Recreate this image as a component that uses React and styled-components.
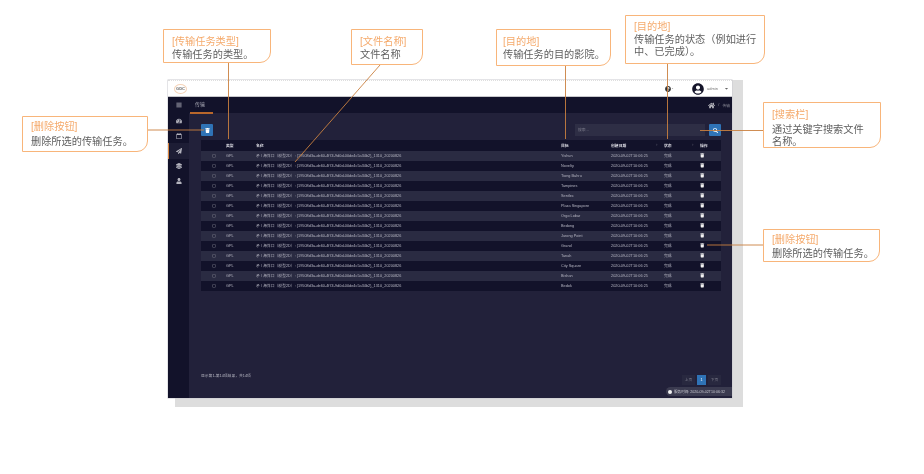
import styled, { createGlobalStyle } from "styled-components";
import {
  FaBars,
  FaTachometerAlt,
  FaRegCalendar,
  FaPaperPlane,
  FaLayerGroup,
  FaUser,
  FaTrash,
  FaSearch,
  FaHome,
  FaUserCircle,
  FaQuestionCircle,
  FaCaretDown,
  FaRegCircle,
} from "react-icons/fa";

const FILE_NAME =
  "矛 / 海洋口（模型2D）: {19508d3a-de60-4f74-9d0d-00de4c5a34b2}_1310_20200826";
const DATE = "2020-09-02T10:06:25";

const SITES = [
  "Yishun",
  "Novelty",
  "Tiong Bahru",
  "Tampines",
  "Sentlec",
  "Plaza Singapore",
  "Orgo Lobar",
  "Bedong",
  "Jurong Point",
  "Grand",
  "Tanah",
  "City Square",
  "Bishan",
  "Bedok",
];

const NAV_ICONS = [
  { Icon: FaTachometerAlt },
  { Icon: FaRegCalendar },
  { Icon: FaPaperPlane, active: true },
  { Icon: FaLayerGroup },
  { Icon: FaUser },
];

const CALLOUTS = [
  { title: "[传输任务类型]", text: "传输任务的类型。", x: 163, y: 29, w: 108, h: 34, top: 6 },
  { title: "[文件名称]", text: "文件名称", x: 351, y: 29, w: 72, h: 36, top: 6 },
  { title: "[删除按钮]", text: "删除所选的传输任务。", x: 22, y: 116, w: 126, h: 36, top: 4, gap: 2 },
  { title: "[目的地]", text: "传输任务的目的影院。", x: 496, y: 29, w: 115, h: 37, pad: 6, top: 6 },
  {
    title: "[目的地]",
    text: "传输任务的状态（例如进行中、已完成）。",
    x: 625,
    y: 15,
    w: 140,
    h: 49,
  },
  { title: "[搜索栏]", text: "通过关键字搜索文件名称。", x: 763, y: 102, w: 118, h: 46, right: 14, top: 6, gap: 2 },
  { title: "[删除按钮]", text: "删除所选的传输任务。", x: 763, y: 229, w: 117, h: 33, top: 4, gap: 1.5 },
];

const GlobalStyle = createGlobalStyle`
  html, body {
    margin: 0;
    padding: 0;
    background: #ffffff;
    font-family: "Liberation Sans", "Noto Sans CJK SC", sans-serif;
  }
`;

const Page = styled.div`
  position: relative;
  width: 924px;
  height: 474px;
  overflow: hidden;
  background: #fff;
  padding: 83px 0 0 175px;
  box-sizing: border-box;
  filter: blur(0.35px);
`;

const Backing = styled.div`
  width: 568px;
  height: 327px;
  background: #dddddd;
`;

const Shot = styled.div`
  width: 564px;
  height: 318px;
  margin: -3px 0 0 -7px;
  display: flex;
  flex-direction: column;
  position: relative;
  background: #22213a;
  box-shadow: 0 0 0 0.5px #c9c9cf;
`;

const Header = styled.header`
  height: 17px;
  flex: none;
  background: #fff;
  display: flex;
  align-items: center;
  padding: 0 3px 0 6px;
  color: #8a8a8a;
  font-size: 4px;
  border-top: 1px dotted #dedede;
  border-bottom: 1px solid #c8c8cc;
  box-sizing: border-box;
`;

const Logo = styled.div`
  width: 13px;
  height: 10px;
  border-radius: 50%;
  border: 1px solid #f5d3b8;
  box-sizing: border-box;
  display: flex;
  align-items: center;
  justify-content: center;
  font-size: 4px;
  font-weight: 700;
  color: #666;
`;

const HeaderRight = styled.div`
  margin-left: auto;
  display: flex;
  align-items: center;
  color: #222;
`;

const HelpIcon = styled(FaQuestionCircle)`
  font-size: 6px;
  color: #333;
`;

const HelpCaret = styled(FaCaretDown)`
  font-size: 3px;
  color: #888;
  margin-right: 18px;
`;

const Avatar = styled(FaUserCircle)`
  font-size: 12px;
  color: #15152a;
  margin-right: 3px;
`;

const UserName = styled.span`
  color: #777;
  font-size: 4px;
  margin-right: 6px;
`;

const Caret = styled(FaCaretDown)`
  font-size: 5px;
  color: #666;
`;

const Body = styled.div`
  flex: 1;
  display: flex;
  min-height: 0;
`;

const Sidebar = styled.nav`
  width: 21px;
  flex: none;
  background: #12122a;
  display: flex;
  flex-direction: column;
  padding-top: 0.8px;
  color: #b4b4be;
`;

const NavItem = styled.div`
  height: 15.2px;
  display: flex;
  align-items: center;
  justify-content: center;
  font-size: 6px;
  box-sizing: border-box;
  background: ${(p) => (p.$active ? "#1d1d35" : "transparent")};
  border-left: 1px solid ${(p) => (p.$active ? "#d9853f" : "transparent")};
  padding-right: 1px;
`;

const Main = styled.main`
  flex: 1;
  min-width: 0;
  display: flex;
  flex-direction: column;
`;

const TopBar = styled.div`
  height: 16px;
  flex: none;
  background: #12122a;
  display: flex;
  align-items: center;
  padding: 0 2px 0 6px;
  color: #a8a8b4;
  font-size: 5px;
`;

const TabLabel = styled.span`
  position: relative;
  width: 22px;
  height: 16px;
  line-height: 15px;
  &::after {
    content: "";
    position: absolute;
    left: -5px;
    top: 15px;
    width: 23px;
    height: 1.5px;
    background: #b9672b;
  }
`;

const Crumbs = styled.div`
  margin-left: auto;
  display: flex;
  align-items: center;
  gap: 3px;
  font-size: 3.8px;
  color: #8c8c98;
`;

const HomeIcon = styled(FaHome)`
  font-size: 7px;
  color: #b5b5bd;
`;

const Content = styled.div`
  flex: 1;
  display: flex;
  flex-direction: column;
  padding: 11px 11px 2px 12px;
  min-height: 0;
`;

const Toolbar = styled.div`
  display: flex;
  align-items: center;
  height: 12px;
  margin-bottom: 4px;
`;

const BlueButton = styled.button`
  width: 12px;
  height: 12px;
  border: none;
  padding: 0;
  border-radius: 1px;
  background: #2f73b6;
  color: #fff;
  font-size: 5px;
  display: flex;
  align-items: center;
  justify-content: center;
`;

const SearchBox = styled.div`
  margin-left: auto;
  margin-right: 4px;
  width: 127px;
  height: 12px;
  padding-left: 3px;
  background: #2e2e45;
  color: #7f7f8e;
  font-size: 3.8px;
  line-height: 12px;
`;

const Row = styled.div`
  display: grid;
  grid-template-columns: 25px 30px 305px 50px 53px 36px 21px;
  align-items: center;
  height: 10px;
  font-size: 3.8px;
  letter-spacing: 0.02px;
  white-space: nowrap;
  color: ${(p) => (p.$head ? "#d8d8e0" : "#b6b6c2")};
  font-weight: ${(p) => (p.$head ? 700 : 400)};
  background: ${(p) => (p.$odd ? "#2a2b42" : "#12122a")};
`;

const HeadRow = styled(Row)`
  height: 10.5px;
`;

const RadioCell = styled.span`
  display: flex;
  justify-content: center;
  font-size: 4px;
  color: #7d7d8a;
`;

const SortCell = styled.span`
  display: flex;
  justify-content: space-between;
  padding-right: 6px;
`;

const SortMark = styled.span`
  color: #777785;
`;

const RowTrash = styled(FaTrash)`
  font-size: 4.5px;
  color: #f2f2f2;
`;

const Footer = styled.div`
  margin-top: auto;
  display: flex;
  align-items: flex-start;
  justify-content: space-between;
  height: 21px;
  font-size: 3.8px;
  color: #b5b5c0;
`;

const Summary = styled.span`
  line-height: 2px;
`;

const Pager = styled.div`
  display: flex;
  gap: 2px;
`;

const PageLink = styled.span`
  width: ${(p) => (p.$active ? "9px" : "13px")};
  height: 10px;
  line-height: 10px;
  text-align: center;
  background: ${(p) => (p.$active ? "#2f73b6" : "#28283f")};
  color: ${(p) => (p.$active ? "#fff" : "#7f7f8e")};
`;

const StatusPill = styled.div`
  position: absolute;
  right: 0;
  bottom: 2px;
  width: 66px;
  height: 9px;
  background: #3b3b50;
  border-radius: 4.5px 0 0 4.5px;
  color: #c8c8d0;
  font-size: 3.6px;
  display: flex;
  align-items: center;
  gap: 2px;
  padding-left: 2px;
  box-sizing: border-box;
  white-space: nowrap;
  overflow: hidden;
`;

const StatusDot = styled.span`
  width: 4px;
  height: 4px;
  border-radius: 50%;
  background: #f2f2f2;
  flex: none;
`;

const Leaders = styled.svg`
  position: absolute;
  left: 0;
  top: 0;
  pointer-events: none;
`;

const Callout = styled.div`
  position: absolute;
  left: ${(p) => p.$x}px;
  top: ${(p) => p.$y}px;
  width: ${(p) => p.$w}px;
  height: ${(p) => p.$h}px;
  box-sizing: border-box;
  padding: ${(p) => p.$top}px ${(p) => p.$right}px 0 ${(p) => p.$pad}px;
  background: #fff;
  border: 1.4px solid #f8b57a;
  border-radius: 0 0 11px 0;
  font-size: 10.2px;
  line-height: 12.5px;
  color: #5f5f5f;
`;

const CalloutTitle = styled.div`
  color: #f5aa6c;
`;

const CalloutText = styled.div`
  margin-top: ${(p) => p.$gap}px;
`;

export default function App() {
  return (
    <>
      <GlobalStyle />
      <Page>
        <Backing>
          <Shot>
            <Header>
              <Logo>GDC</Logo>
              <HeaderRight>
                <HelpIcon />
                <HelpCaret />
                <Avatar />
                <UserName>admin</UserName>
                <Caret />
              </HeaderRight>
            </Header>
            <Body>
              <Sidebar>
                <NavItem>
                  <FaBars />
                </NavItem>
                {NAV_ICONS.map(({ Icon, active }, i) => (
                  <NavItem key={i} $active={active}>
                    <Icon />
                  </NavItem>
                ))}
              </Sidebar>
              <Main>
                <TopBar>
                  <TabLabel>传输</TabLabel>
                  <Crumbs>
                    <HomeIcon />
                    <span>/</span>
                    <span>传输</span>
                  </Crumbs>
                </TopBar>
                <Content>
                  <Toolbar>
                    <BlueButton>
                      <FaTrash />
                    </BlueButton>
                    <SearchBox>搜索...</SearchBox>
                    <BlueButton>
                      <FaSearch />
                    </BlueButton>
                  </Toolbar>
                  <HeadRow $head>
                    <span />
                    <span>类型</span>
                    <span>名称</span>
                    <span>目标</span>
                    <SortCell>
                      创建日期<SortMark>↕</SortMark>
                    </SortCell>
                    <SortCell>
                      状态<SortMark>↕</SortMark>
                    </SortCell>
                    <span>操作</span>
                  </HeadRow>
                  {SITES.map((site, i) => (
                    <Row key={site} $odd={i % 2 === 0}>
                      <RadioCell>
                        <FaRegCircle />
                      </RadioCell>
                      <span>GPL</span>
                      <span>{FILE_NAME}</span>
                      <span>{site}</span>
                      <span>{DATE}</span>
                      <span>完成</span>
                      <RowTrash />
                    </Row>
                  ))}
                  <Footer>
                    <Summary>显示第1-第14项结果，共14项</Summary>
                    <Pager>
                      <PageLink>上页</PageLink>
                      <PageLink $active>1</PageLink>
                      <PageLink>下页</PageLink>
                    </Pager>
                  </Footer>
                  <StatusPill>
                    <StatusDot />
                    服务时间: 2020-09-02T10:06:32
                  </StatusPill>
                </Content>
              </Main>
            </Body>
          </Shot>
        </Backing>
        <Leaders width="924" height="474" viewBox="0 0 924 474" fill="none">
          <g stroke="#c9803f" strokeWidth="0.9">
            <path d="M228.5 63V139" />
            <path d="M380 65L295 162" />
            <path d="M148 130H204" />
            <path d="M565.5 66V139" />
            <path d="M667.5 64V139" />
            <path d="M763 130.5H700" />
            <path d="M763 245H707" />
          </g>
        </Leaders>
        {CALLOUTS.map((c, i) => (
          <Callout
            key={i}
            $x={c.x}
            $y={c.y}
            $w={c.w}
            $h={c.h}
            $pad={c.pad ?? 8}
            $right={c.right ?? 2}
            $top={c.top ?? 5}
          >
            <CalloutTitle>{c.title}</CalloutTitle>
            <CalloutText $gap={c.gap ?? 0}>{c.text}</CalloutText>
          </Callout>
        ))}
      </Page>
    </>
  );
}
